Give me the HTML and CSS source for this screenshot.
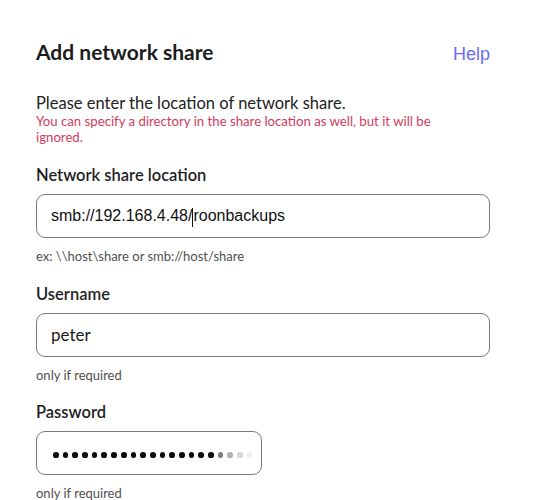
FILE: index.html
```html
<!DOCTYPE html>
<html lang="en">
<head>
<meta charset="utf-8">
<title>Add network share</title>
<link rel="stylesheet" href="styles.css">
</head>
<body>
<div class="dialog">
  <div class="header">
    <h1 class="title">Add network share</h1>
    <a class="help" href="#">Help</a>
  </div>
  <p class="intro">Please enter the location of network share.</p>
  <p class="warning">You can specify a directory in the share location as well, but it will be ignored.</p>

  <div class="field">
    <div class="label">Network share location</div>
    <div class="input input-url"><span>smb://192.168.4.48/</span><span class="caret"></span><span>roonbackups</span></div>
    <div class="hint">ex: \\host\share or smb://host/share</div>
  </div>

  <div class="field">
    <div class="label">Username</div>
    <div class="input input-text">peter</div>
    <div class="hint">only if required</div>
  </div>

  <div class="field">
    <div class="label">Password</div>
    <div class="input input-pass">
      <span class="dot"></span><span class="dot"></span><span class="dot"></span><span class="dot"></span><span class="dot"></span><span class="dot"></span><span class="dot"></span><span class="dot"></span><span class="dot"></span><span class="dot"></span><span class="dot"></span><span class="dot"></span><span class="dot"></span><span class="dot"></span><span class="dot"></span><span class="dot"></span><span class="dot"></span><span class="dot f1"></span><span class="dot f2"></span><span class="dot f3"></span><span class="dot f4"></span>
    </div>
    <div class="hint">only if required</div>
  </div>
</div>
</body>
</html>
```

FILE: styles.css
```css
html, body {
  margin: 0;
  padding: 0;
  background: #ffffff;
}

body {
  font-family: Lato, "Noto Sans", sans-serif;
  color: #1f1f1f;
}

.dialog {
  width: 454px;
  padding: 39px 0 0 36px;
}

.header {
  display: flex;
  justify-content: space-between;
  align-items: baseline;
}

.title {
  margin: 0;
  font-size: 21px;
  line-height: 26px;
  font-weight: 700;
  color: #1c1c1c;
}

.help {
  font-family: "Liberation Sans", Arial, sans-serif;
  font-size: 18px;
  color: #6b6cf2;
  text-decoration: none;
}

.intro {
  margin: 28px 0 0 0;
  font-size: 16.5px;
  line-height: 20px;
  color: #222222;
}

.warning {
  margin: 0;
  max-width: 420px;
  font-size: 13.2px;
  line-height: 16px;
  color: #d23a5c;
}

.field {
  margin-top: 20px;
  display: flex;
  flex-direction: column;
}

.field + .field {
  margin-top: 19.5px;
}

.label {
  font-size: 16.5px;
  line-height: 20px;
  font-weight: 600;
  color: #1f1f1f;
}

.input {
  margin-top: 9px;
  height: 44px;
  box-sizing: border-box;
  border: 1px solid #7a7a7a;
  border-radius: 9px;
  display: flex;
  align-items: center;
  padding-left: 14px;
  background: #ffffff;
}

.input-url {
  font-family: "Liberation Sans", Arial, sans-serif;
  font-size: 16px;
  color: #111111;
}

.caret {
  display: inline-block;
  width: 1px;
  height: 19px;
  background: #111111;
  margin-top: 2px;
}

.input-text {
  font-size: 17px;
  color: #1a1a1a;
}

.input-pass {
  width: 226px;
  padding-left: 16px;
  gap: 4px;
  overflow: hidden;
}

.dot {
  flex: none;
  width: 5.7px;
  height: 5.7px;
  border-radius: 50%;
  background: #0d0d0d;
  margin-top: 4px;
}

.dot.f1 { background: #7d7d7d; }
.dot.f2 { background: #b0b0b0; }
.dot.f3 { background: #d4d4d4; }
.dot.f4 { background: #ececec; }

.hint {
  margin-top: 10px;
  font-size: 13px;
  line-height: 16px;
  color: #4f4f4f;
}
```
